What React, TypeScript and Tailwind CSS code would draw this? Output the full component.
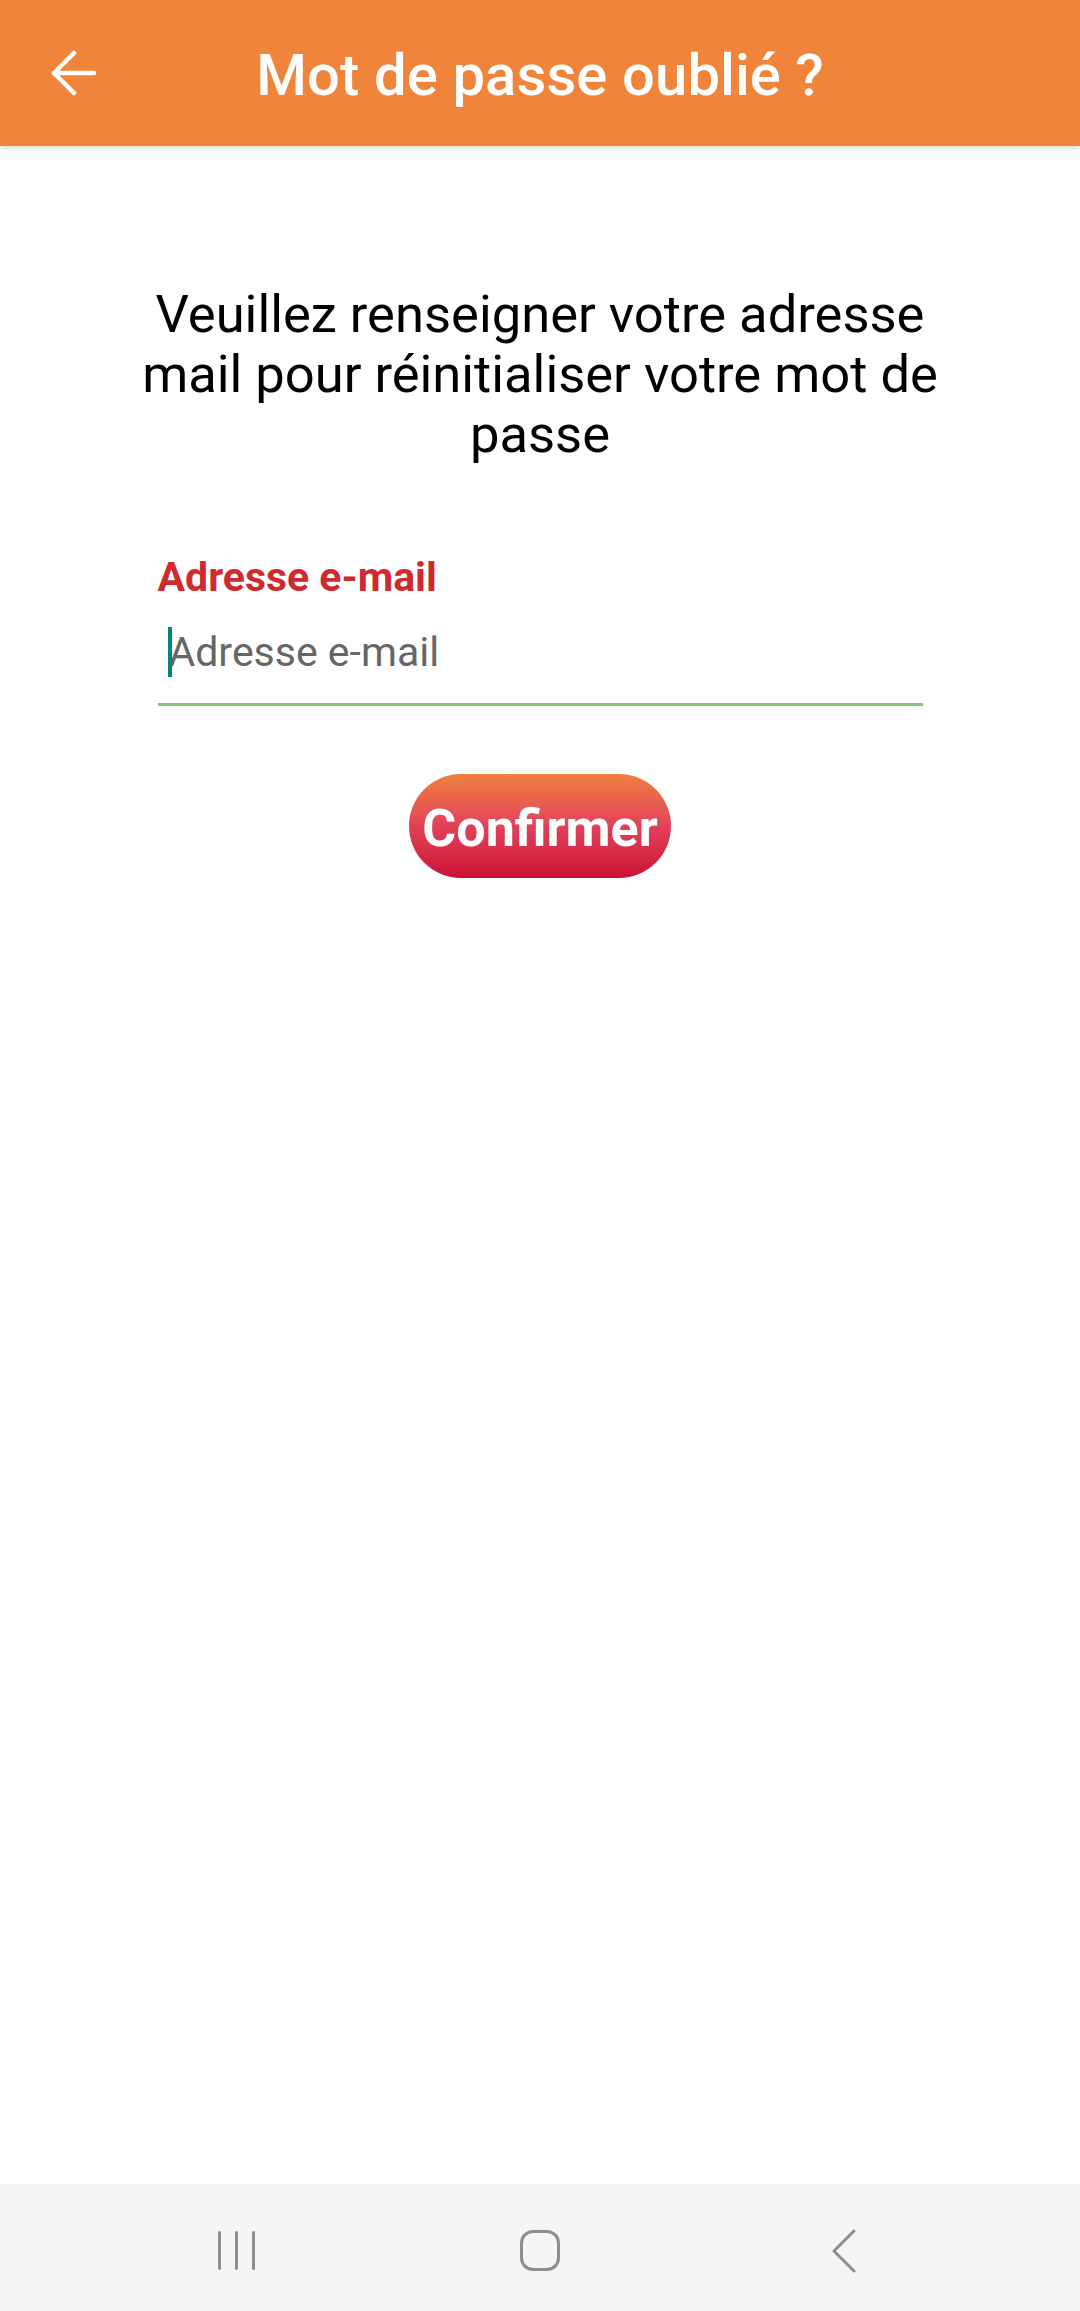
import React from "react";

export default function App() {
  return (
    <div className="w-[1080px] h-[2311px] flex flex-col bg-white font-['Roboto','Liberation_Sans',sans-serif] overflow-hidden">
      {/* Header */}
      <header className="h-[146px] shrink-0 bg-[#F0843A] grid grid-cols-[1fr_auto_1fr] items-center shadow-[0_3px_5px_rgba(0,0,0,0.13)] relative z-10">
        <div className="pl-[50px] flex items-center">
          <svg width="48" height="46" viewBox="0 0 48 46" fill="none" stroke="#ffffff" strokeWidth="4.5" strokeLinecap="round" strokeLinejoin="round">
            <line x1="4" y1="23" x2="44" y2="23" />
            <polyline points="24,3 4,23 24,43" />
          </svg>
        </div>
        <h1 className="text-white text-[58px] font-medium leading-none pt-[4px] tracking-[0.1px]">Mot de passe oublié ?</h1>
        <div />
      </header>

      {/* Content */}
      <main className="flex-1 flex flex-col items-center">
        <p className="mt-[138px] w-[860px] text-center text-[52.5px] leading-[60px] text-black">
          Veuillez renseigner votre adresse mail pour réinitialiser votre mot de passe
        </p>

        <div className="mt-[89px] w-[765px] flex flex-col">
          <label className="text-[41px] leading-[49px] font-bold text-[#CF2A2E]">Adresse e-mail</label>
          <div className="mt-[25px] pl-[10px] flex items-center h-[50px]">
            <span className="w-[4px] h-[50px] bg-[#00877A] shrink-0 relative z-10" />
            <span className="-ml-[3px] text-[41px] leading-[50px] text-[#666666]">Adresse e-mail</span>
          </div>
          <div className="mt-[26px] h-[3px] bg-[#83C77C]" />
        </div>

        <button className="mt-[68px] w-[262px] h-[104px] rounded-full bg-linear-to-b from-[#EF7E3A] via-[#E2405A] to-[#CD0B36] flex items-center justify-center">
          <span className="text-white text-[52px] font-bold leading-none pt-[6px]">Confirmer</span>
        </button>
      </main>

      {/* Navigation bar */}
      <nav className="h-[127px] shrink-0 bg-[#F5F5F5] flex items-center justify-center pt-[6px]">
        <div className="w-[304px] flex items-center justify-center">
          <div className="flex gap-[14px]">
            <span className="w-[3px] h-[39px] rounded-full bg-[#8E8E8E]" />
            <span className="w-[3px] h-[39px] rounded-full bg-[#8E8E8E]" />
            <span className="w-[3px] h-[39px] rounded-full bg-[#8E8E8E]" />
          </div>
        </div>
        <div className="w-[304px] flex items-center justify-center">
          <span className="w-[40px] h-[41px] rounded-[13px] border-[3px] border-[#8E8E8E]" />
        </div>
        <div className="w-[304px] flex items-center justify-center">
          <svg width="28" height="46" viewBox="0 0 28 46" fill="none" stroke="#8E8E8E" strokeWidth="3" strokeLinecap="round" strokeLinejoin="round">
            <polyline points="24,3 4,23 24,43" />
          </svg>
        </div>
      </nav>
    </div>
  );
}
